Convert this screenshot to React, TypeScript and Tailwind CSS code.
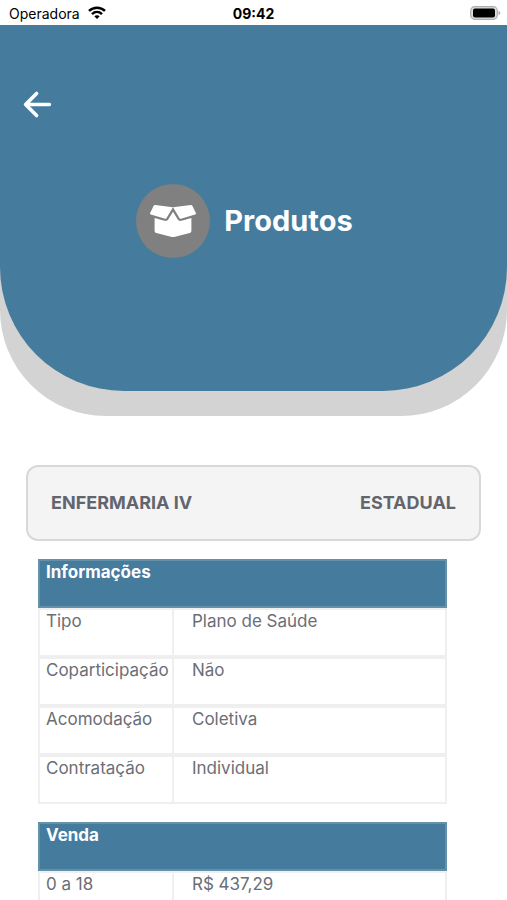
import React from 'react';
import { FaBoxOpen } from 'react-icons/fa';
import { IoArrowBackOutline } from 'react-icons/io5';

const sections = [
  {
    title: 'Informações',
    rows: [
      ['Tipo', 'Plano de Saúde'],
      ['Coparticipação', 'Não'],
      ['Acomodação', 'Coletiva'],
      ['Contratação', 'Individual'],
    ],
  },
  {
    title: 'Venda',
    rows: [['0 a 18', 'R$ 437,29']],
  },
];

const StatusBar = () => (
  <div className="grid grid-cols-3 items-center h-[25px] px-[6px] pt-[2px] bg-white text-black text-sm">
    <div className="flex items-center gap-2 pl-[3px]">
      <span>Operadora</span>
      <svg viewBox="0 0 18 13" className="w-[18px] h-[13px] -mt-[2px]" fill="none" stroke="currentColor" strokeWidth="2.5">
        <path d="M1 4.9C5.500 .6 12.500 .6 17 4.900" />
        <path d="M4 8.100c2.900-2.700 7.100-2.700 10 0" />
        <path d="M6.300 10.200c1.600-1.300 3.800-1.300 5.400 0L9 13z" fill="currentColor" stroke="none" />
      </svg>
    </div>
    <span className="text-center font-bold">09:42</span>
    <svg viewBox="0 0 31 14" className="justify-self-end w-[31px] h-[14px] -mt-[2px]">
      <rect x="0.700" y="0.700" width="26.600" height="12.600" rx="4" fill="#dcdcdc" stroke="#adadad" strokeWidth="1.200" />
      <rect x="3" y="2.500" width="22" height="9" rx="2" fill="#000" />
      <path d="M28.500 4.800c2.400.9 2.400 3.500 0 4.400z" fill="#adadad" />
    </svg>
  </div>
);

const Header = () => (
  <header className="bg-[#d3d3d3] rounded-b-[106px] pb-[25px]">
    <div className="bg-[#457b9d] rounded-b-[124px] text-white pt-[60px] pb-[133px]">
      <button type="button" aria-label="Voltar" className="block ml-[18px]">
        <IoArrowBackOutline className="w-[39px] h-[39px]" />
      </button>
      <div className="flex items-center justify-center gap-[14px] mt-[60px] pr-[18px]">
        <div className="flex items-center justify-center w-[74px] h-[74px] rounded-full bg-[#808080]">
          <FaBoxOpen className="w-[46px] h-[46px]" />
        </div>
        <h1 className="text-[29px] font-bold">Produtos</h1>
      </div>
    </div>
  </header>
);

const App = () => {
  return (
    <div className="flex flex-col h-screen bg-white font-['Inter',sans-serif] text-[#6b6e76]">
      <StatusBar />
      <Header />

      <main className="flex-1 min-h-0 overflow-y-auto [scrollbar-width:none] px-[26px] pt-[49px]">
        <div className="flex items-center justify-between h-[76px] px-[23px] rounded-xl border-2 border-[#d8d8d8] bg-[#f4f4f4] text-lg font-bold text-[#63656e]">
          <span>ENFERMARIA IV</span>
          <span>ESTADUAL</span>
        </div>

        <div className="flex flex-col gap-[18px] mt-[18px] ml-[12px] mr-[34px]">
          {sections.map((section) => (
            <table key={section.title} className="w-full table-fixed border-separate border-spacing-0 text-left text-[17px] leading-[22px]">
              <colgroup>
                <col className="w-[33%]" />
                <col />
              </colgroup>
              <thead>
                <tr className="h-[49px]">
                  <th colSpan={2} className="align-top px-[6px] border-2 border-[#6490a8] bg-[#457b9d] text-white font-bold">
                    {section.title}
                  </th>
                </tr>
              </thead>
              <tbody>
                {section.rows.map(([label, value]) => (
                  <tr key={label} className="h-[49px]">
                    <th scope="row" className="align-top pl-[6px] border-y-2 border-l-2 border-r border-[#efefef] font-normal whitespace-nowrap">
                      {label}
                    </th>
                    <td className="align-top pl-[18px] border-y-2 border-r-2 border-l border-[#efefef]">{value}</td>
                  </tr>
                ))}
              </tbody>
            </table>
          ))}
        </div>
      </main>
    </div>
  );
};

export default App;
